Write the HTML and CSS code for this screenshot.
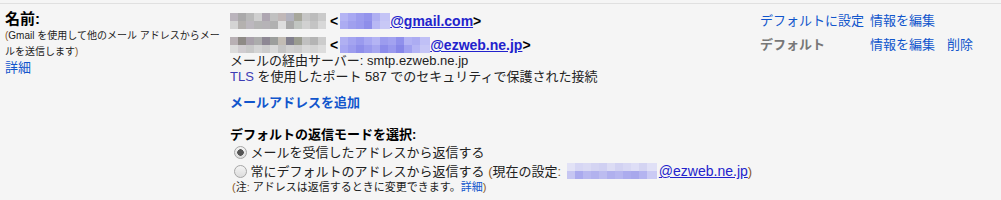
FILE: index.html
```html
<!DOCTYPE html>
<html lang="ja">

<head>
  <meta charset="UTF-8">
  <title>アカウント設定</title>
  <link rel="stylesheet" href="styles.css">
</head>

<body>
  <div class="setting">
    <div class="label">
      <div class="label-title">名前:</div>
      <div class="label-note"><span class="paren">(</span>Gmail を使用して他のメール アドレスからメー<br>ルを送信します<span class="paren">)</span></div>
      <a class="link" href="#">詳細</a>
    </div>

    <div class="body">
      <div class="account">
        <div class="addr">
          <span class="blur blur-name1"></span>
          <b class="angle">&lt;</b><span class="blur blur-mail1"></span><a class="mail bold" href="#">@gmail.com</a><b class="angle">&gt;</b>
        </div>
        <div class="actions">
          <a class="link act-first" href="#">デフォルトに設定</a>
          <a class="link" href="#">情報を編集</a>
        </div>
      </div>

      <div class="account">
        <div class="addr">
          <span class="blur blur-name2"></span>
          <b class="angle">&lt;</b><span class="blur blur-mail2"></span><a class="mail bold" href="#">@ezweb.ne.jp</a><b class="angle">&gt;</b>
        </div>
        <div class="actions">
          <span class="is-default act-first">デフォルト</span>
          <a class="link" href="#">情報を編集</a>
          <a class="link act-delete" href="#">削除</a>
        </div>
      </div>

      <div class="server">メールの経由サーバー: smtp.ezweb.ne.jp</div>
      <div class="server"><span class="tls">TLS</span> を使用したポート 587 でのセキュリティで保護された接続</div>

      <a class="link add" href="#">メールアドレスを追加</a>

      <div class="reply">
        <div class="reply-title">デフォルトの返信モードを選択:</div>
        <label class="option"><input type="radio" name="reply" checked> メールを受信したアドレスから返信する</label>
        <label class="option"><input type="radio" name="reply"> 常にデフォルトのアドレスから返信する <span class="paren">(</span>現在の設定<span class="paren">:</span> <span class="blur blur-mail3"></span><a class="mail" href="#">@ezweb.ne.jp</a><span class="paren">)</span></label>
        <div class="reply-note"><span class="paren">(</span>注<span class="paren">:</span> アドレスは返信するときに変更できます。<a class="link" href="#">詳細</a><span class="paren">)</span></div>
      </div>
    </div>
  </div>
</body>

</html>
```

FILE: styles.css
```css
* {
  margin: 0;
  padding: 0;
}

body {
  padding-top: 3px;
  background-color: #f5f5f5;
  color: #222;
  font-family: "Liberation Sans", "Noto Sans CJK JP", sans-serif;
  font-size: 13px;
  line-height: 16px;
}

a {
  text-decoration: none;
}

.setting {
  display: flex;
  height: 196px;
  border-top: 1px solid #e0e0e0;
}

.label {
  flex-shrink: 0;
  width: 225px;
  padding: 7px 0 0 5px;
}

.label-title {
  font-size: 15px;
  font-weight: bold;
  color: #000;
}

.label-note {
  width: 228px;
  margin-top: 1px;
  font-size: 10px;
  line-height: 16px;
}

.paren {
  color: #8a5a2a;
}

.link {
  color: #15c;
}

.body {
  flex: 1;
  padding: 9px 0 0 0;
}

.account {
  display: flex;
  margin-bottom: 8px;
}

.account+.account {
  margin-bottom: 0;
}

.addr {
  display: flex;
  align-items: center;
  flex-shrink: 0;
  width: 530px;
  height: 16px;
  font-size: 14px;
}

.angle {
  color: #000;
}

.bold {
  font-weight: bold;
}

.mail {
  color: #22c;
  font-size: 14px;
  text-decoration: underline;
}

.blur {
  display: inline-block;
  height: 16px;
}

.blur-name1,
.blur-name2 {
  width: 96px;
  margin-right: 4px;
}

.blur-name1 {
  background:
    linear-gradient(to right, #bab4bc 0 8px, #aaa9aa 8px 16px, #b9b9b9 16px 24px, #cfcfcf 24px 32px, #aea6b1 32px 40px, #c1c1c1 40px 48px, #c1b8b8 48px 56px, #b2b2be 56px 64px, #a7a79b 64px 72px, #c6c6c6 72px 80px, #bcbcbc 80px 88px, #cacaca 88px 96px) top / 100% 8px no-repeat,
    linear-gradient(to right, #d4d4d4 0 8px, #b4b1af 8px 16px, #bcb8be 16px 24px, #b5b5b5 24px 32px, #b6b3b7 32px 40px, #b1b1b1 40px 48px, #dddddd 48px 56px, #a9a9a9 56px 64px, #c1c5c1 64px 72px, #d1d1d1 72px 80px, #c4c4c4 80px 88px, #d8d8d8 88px 96px) bottom / 100% 8px no-repeat;
}

.blur-name2 {
  background:
    linear-gradient(to right, #b8b0b4 0 8px, #8e8a86 8px 16px, #a8a0aa 16px 24px, #acacac 24px 32px, #8e8894 32px 40px, #9c9e9c 40px 48px, #c2bcb4 48px 56px, #82808e 56px 64px, #9a9c90 64px 72px, #c0c0c0 72px 80px, #b4b4b4 80px 88px, #cccccc 88px 96px) top / 100% 8px no-repeat,
    linear-gradient(to right, #dcdcdc 0 8px, #d0ccd0 8px 16px, #c8c8c8 16px 24px, #d4d4d4 24px 32px, #cccccc 32px 40px, #d8d8d8 40px 48px, #c4c4c4 48px 56px, #d0d0d0 56px 64px, #cccccc 64px 72px, #d8d8d8 72px 80px, #d4d4d4 80px 88px, #dcdcdc 88px 96px) bottom / 100% 8px no-repeat;
}

.blur-mail1 {
  width: 50px;
  margin-left: 2px;
  background:
    linear-gradient(to right, #b4b4f4 0 8px, #a8a8f2 8px 16px, #9c9cee 16px 24px, #9494ec 24px 32px, #b0b0f2 32px 40px, #c4c4f6 40px 50px) top / 100% 8px no-repeat,
    linear-gradient(to right, #acacf2 0 8px, #a0a0ee 8px 16px, #9a9aee 16px 24px, #8e8eea 24px 32px, #b8b8f4 32px 40px, #c8c8f6 40px 50px) bottom / 100% 8px no-repeat;
}

.blur-mail2 {
  width: 90px;
  margin-left: 2px;
  background:
    linear-gradient(to right, #b0b0f2 0 8px, #a4a4f0 8px 16px, #9a9aee 16px 24px, #a8a8f2 24px 32px, #b4b4f4 32px 40px, #9c9cee 40px 48px, #a2a2f0 48px 56px, #9090ec 56px 64px, #b2b2f4 64px 72px, #acacf2 72px 80px, #c0c0f6 80px 90px) top / 100% 8px no-repeat,
    linear-gradient(to right, #a8a8f2 0 8px, #9c9cee 8px 16px, #8e8eea 16px 24px, #9a9aee 24px 32px, #a6a6f0 32px 40px, #8c8cea 40px 48px, #9898ee 48px 56px, #8686e8 56px 64px, #a0a0f0 64px 72px, #b4b4f4 72px 80px, #c6c6f6 80px 90px) bottom / 100% 8px no-repeat;
}

.blur-mail3 {
  width: 90px;
  vertical-align: -3px;
  background:
    linear-gradient(to right, #e2e2f6 0 8px, #d6d6f4 8px 16px, #dadaf4 16px 24px, #d4d4f2 24px 32px, #d0d0f2 32px 40px, #dcdcf4 40px 48px, #d2d2f2 48px 56px, #d8d8f4 56px 64px, #dedef6 64px 72px, #d4d4f2 72px 80px, #e0e0f6 80px 90px) top / 100% 8px no-repeat,
    linear-gradient(to right, #c6c6f2 0 8px, #aaaaee 8px 16px, #b8b8f0 16px 24px, #b2b2ee 24px 32px, #bcbcf0 32px 40px, #b0b0ee 40px 48px, #b6b6f0 48px 56px, #acacee 56px 64px, #a8a8ec 64px 72px, #b4b4f0 72px 80px, #cacaf4 80px 90px) bottom / 100% 8px no-repeat;
}

.actions {
  display: flex;
  white-space: nowrap;
}

.act-first {
  flex-shrink: 0;
  width: 110px;
}

.act-delete {
  margin-left: 12px;
}

.is-default {
  color: #777;
  font-weight: bold;
}

.tls {
  color: #3c3cb4;
}

.add {
  display: inline-block;
  margin-top: 10px;
  font-weight: bold;
}

.reply {
  margin-top: 16px;
}

.reply-title {
  font-weight: bold;
  color: #000;
}

.option {
  display: block;
  height: 16px;
  margin-top: 2px;
  white-space: nowrap;
}

.option input {
  appearance: none;
  display: inline-block;
  width: 13px;
  height: 13px;
  margin: 0 0 0 4px;
  vertical-align: -2px;
  border: 1px solid #a6a6a6;
  border-radius: 50%;
  background: linear-gradient(#f4f4f4, #dcdcdc);
}

.option input:checked {
  background: radial-gradient(circle, #555 0 3px, transparent 3.5px), linear-gradient(#f4f4f4, #dcdcdc);
}

.option .blur {
  margin: 0 2px 0 2px;
}

.reply-note {
  margin: 1px 0 0 2px;
  font-size: 11px;
  line-height: 14px;
}
```
